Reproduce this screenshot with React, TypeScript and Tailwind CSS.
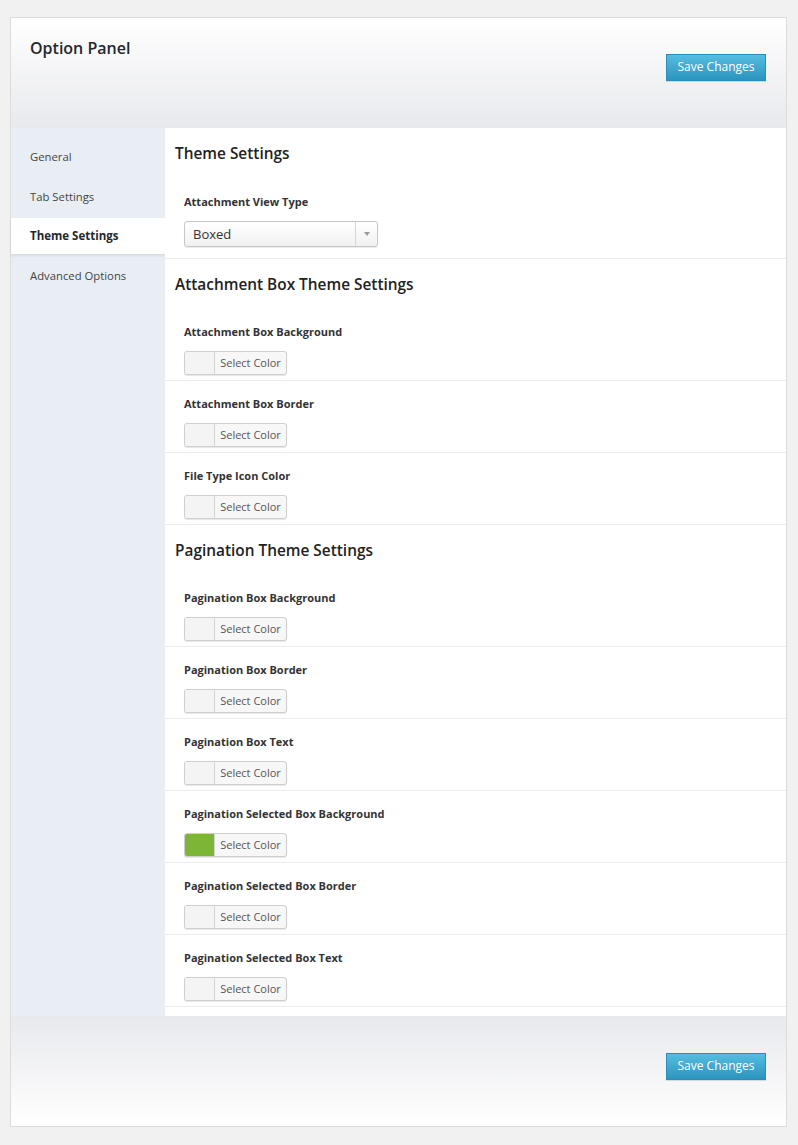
import React from 'react'

const font = { fontFamily: '"Open Sans", "Noto Sans", sans-serif' }

const navItems = ['General', 'Tab Settings', 'Theme Settings', 'Advanced Options']

const attachmentRows = ['Attachment Box Background', 'Attachment Box Border', 'File Type Icon Color']

const paginationRows: { label: string; color?: string }[] = [
  { label: 'Pagination Box Background' },
  { label: 'Pagination Box Border' },
  { label: 'Pagination Box Text' },
  { label: 'Pagination Selected Box Background', color: '#7db536' },
  { label: 'Pagination Selected Box Border' },
  { label: 'Pagination Selected Box Text' },
]

function SaveButton() {
  return (
    <button className="h-[27px] w-[100px] bg-gradient-to-b from-[#55bde0] to-[#2b95bf] border border-[#2a8db8] text-white text-[12px] leading-none shadow-[0_1px_0_rgba(0,0,0,0.12)]">
      Save Changes
    </button>
  )
}

function SectionHeading({ children }: { children: React.ReactNode }) {
  return (
    <div className="h-[50px] pt-[15px] pl-[10px] text-[15.4px] leading-[22px] font-semibold text-[#222]">
      {children}
    </div>
  )
}

function ColorRow({ label, color }: { label: string; color?: string }) {
  return (
    <div className="border-b border-[#ececec] pl-[19px] pt-[16px] pb-[5px] h-[72px]">
      <div className="text-[11px] leading-[14px] font-bold text-[#333]">{label}</div>
      <div className="mt-[12px] flex h-[24px] w-[103px] rounded-[3px] border border-[#cfcfcf] bg-[#f7f7f7] shadow-[0_1px_1px_rgba(0,0,0,0.1)] overflow-hidden">
        <div
          className="w-[30px] h-full border-r border-[#d4d4d4] bg-[#f4f4f4]"
          style={color ? { background: color } : undefined}
        />
        <div className="flex-1 flex items-center justify-center text-[11px] text-[#555]">Select Color</div>
      </div>
    </div>
  )
}

export default function App() {
  return (
    <div className="min-h-[1145px] bg-[#f1f1f1] pt-[17px] px-[10px] pb-[19px]" style={font}>
      <div className="w-[777px] border border-[#dcdcdc] bg-white">
        <div className="h-[110px] bg-gradient-to-b from-white to-[#e8e9ed] flex justify-between">
          <h1 className="pl-[19px] pt-[19px] text-[16px] font-semibold text-[#23282d] leading-[22px]">Option Panel</h1>
          <div className="pt-[35px] pr-[20px]">
            <SaveButton />
          </div>
        </div>
        <div className="flex">
          <div className="w-[154px] bg-[#e9eef5] pt-[9px]">
            {navItems.map((item) => {
              const active = item === 'Theme Settings'
              return (
                <div
                  key={item}
                  className={
                    active
                      ? 'h-[36px] mt-[1px] mb-[2px] flex items-center pl-[19px] text-[11.5px] font-bold text-[#23282d] bg-white w-[155px] shadow-[0_2px_2px_rgba(0,0,0,0.08)]'
                      : 'h-[40px] flex items-center pl-[19px] text-[11.3px] text-[#444]'
                  }
                >
                  {item}
                </div>
              )
            })}
          </div>
          <div className="flex-1 bg-white pb-[9px]">
            <SectionHeading>Theme Settings</SectionHeading>
            <div className="border-b border-[#ececec] pl-[19px] pt-[17px] h-[81px]">
              <div className="text-[11px] leading-[14px] font-bold text-[#333]">Attachment View Type</div>
              <div className="mt-[12px] flex h-[26px] w-[194px] rounded-[3px] border border-[#c6c6c6] bg-gradient-to-b from-white to-[#f1f1f1] shadow-[0_1px_1px_rgba(0,0,0,0.08)]">
                <div className="flex-1 flex items-center pl-[8px] pt-[2px] text-[13px] text-[#333]">Boxed</div>
                <div className="w-[22px] border-l border-[#d6d6d6] flex items-center justify-center">
                  <svg width="6" height="4" viewBox="0 0 6 4">
                    <path d="M0 0h6L3 4z" fill="#999" />
                  </svg>
                </div>
              </div>
            </div>
            <SectionHeading>Attachment Box Theme Settings</SectionHeading>
            {attachmentRows.map((r) => (
              <ColorRow key={r} label={r} />
            ))}
            <SectionHeading>Pagination Theme Settings</SectionHeading>
            {paginationRows.map((r) => (
              <ColorRow key={r.label} label={r.label} color={r.color} />
            ))}
          </div>
        </div>
        <div className="h-[110px] bg-gradient-to-b from-[#e8e9ed] to-white flex justify-end">
          <div className="pt-[36px] pr-[20px]">
            <SaveButton />
          </div>
        </div>
      </div>
    </div>
  )
}
